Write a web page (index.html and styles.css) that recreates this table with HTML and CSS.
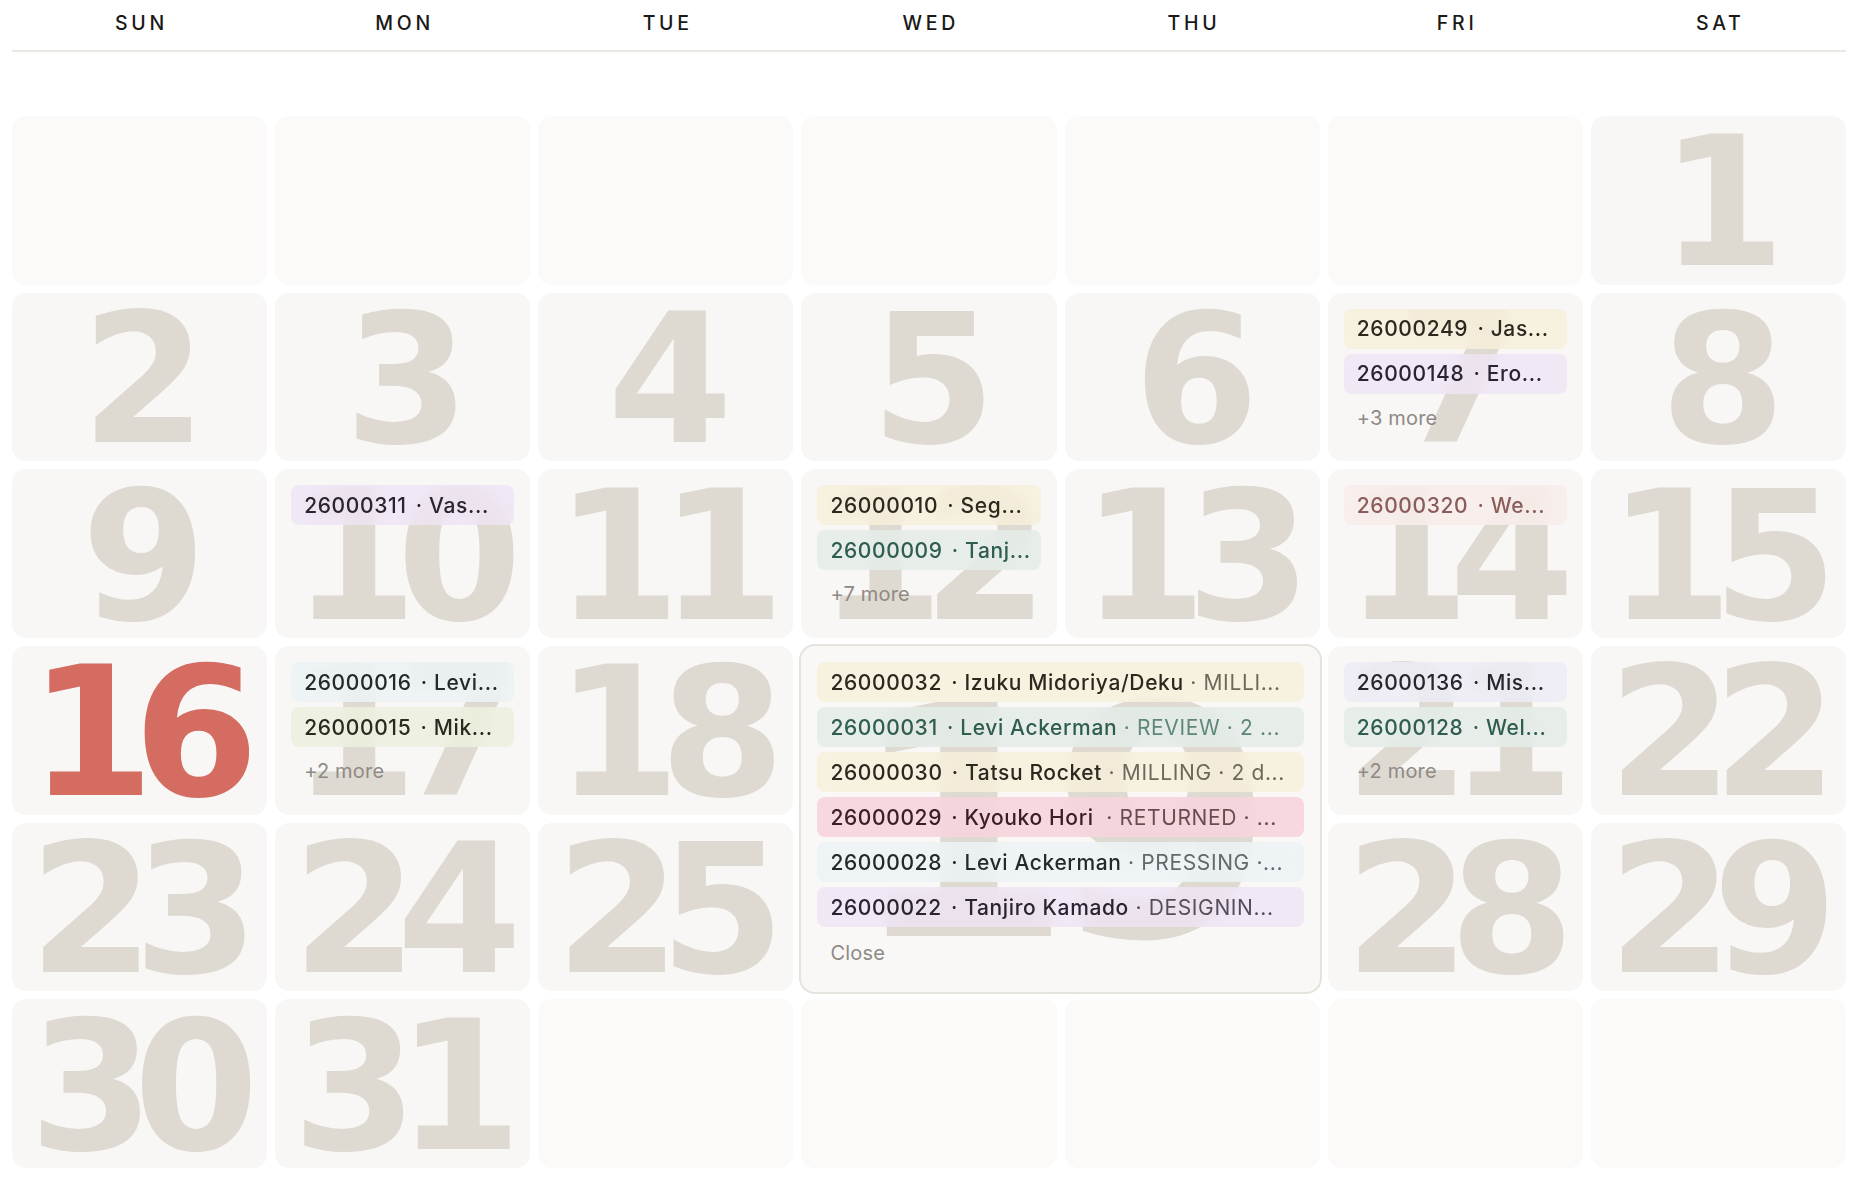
FILE: index.html
```html
<!DOCTYPE html>
<html lang="en">
<head>
<meta charset="utf-8">
<title>Calendar</title>
<link rel="stylesheet" href="styles.css">
</head>
<body>
<div class="cal">
  <div class="weekdays">
    <div class="wd">SUN</div><div class="wd">MON</div><div class="wd">TUE</div><div class="wd">WED</div><div class="wd">THU</div><div class="wd">FRI</div><div class="wd">SAT</div>
  </div>
  <div class="month">
    <div class="cell empty"></div>
    <div class="cell empty"></div>
    <div class="cell empty"></div>
    <div class="cell empty"></div>
    <div class="cell empty"></div>
    <div class="cell empty"></div>
    <div class="cell"><span class="num">1</span></div>

    <div class="cell"><span class="num">2</span></div>
    <div class="cell"><span class="num">3</span></div>
    <div class="cell"><span class="num">4</span></div>
    <div class="cell"><span class="num">5</span></div>
    <div class="cell"><span class="num">6</span></div>
    <div class="cell"><span class="num">7</span>
      <div class="events">
        <div class="chip c-cream"><span class="id">26000249</span> · Jas...</div>
        <div class="chip c-purple"><span class="id">26000148</span> · Ero...</div>
        <div class="more">+3 more</div>
      </div>
    </div>
    <div class="cell"><span class="num">8</span></div>

    <div class="cell"><span class="num">9</span></div>
    <div class="cell"><span class="num">10</span>
      <div class="events">
        <div class="chip c-purple"><span class="id">26000311</span> · Vas...</div>
      </div>
    </div>
    <div class="cell"><span class="num">11</span></div>
    <div class="cell"><span class="num">12</span>
      <div class="events">
        <div class="chip c-cream"><span class="id">26000010</span> · Seg...</div>
        <div class="chip c-green"><span class="id">26000009</span> · Tanj...</div>
        <div class="more">+7 more</div>
      </div>
    </div>
    <div class="cell"><span class="num">13</span></div>
    <div class="cell"><span class="num">14</span>
      <div class="events">
        <div class="chip c-rose"><span class="id">26000320</span> · We...</div>
      </div>
    </div>
    <div class="cell"><span class="num">15</span></div>

    <div class="cell"><span class="num today">16</span></div>
    <div class="cell"><span class="num">17</span>
      <div class="events">
        <div class="chip c-blue"><span class="id">26000016</span> · Levi...</div>
        <div class="chip c-olive"><span class="id">26000015</span> · Mik...</div>
        <div class="more">+2 more</div>
      </div>
    </div>
    <div class="cell"><span class="num">18</span></div>
    <div class="cell open"><span class="num">19</span>
      <div class="popover">
        <span class="num big">19</span>
        <div class="events">
          <div class="chip c-cream"><span class="id">26000032</span> · Izuku Midoriya/Deku<span class="meta"> · MILLI...</span></div>
          <div class="chip c-green"><span class="id">26000031</span> · Levi Ackerman<span class="meta"> · REVIEW · 2 ...</span></div>
          <div class="chip c-cream"><span class="id">26000030</span> · Tatsu Rocket<span class="meta"> · MILLING · 2 d...</span></div>
          <div class="chip c-pink"><span class="id">26000029</span> · Kyouko Hori&nbsp;<span class="meta"> · RETURNED · ...</span></div>
          <div class="chip c-blue"><span class="id">26000028</span> · Levi Ackerman<span class="meta"> · PRESSING ·...</span></div>
          <div class="chip c-purple"><span class="id">26000022</span> · Tanjiro Kamado<span class="meta"> · DESIGNIN...</span></div>
          <div class="more close">Close</div>
        </div>
      </div>
    </div>
    <div class="cell"><span class="num">20</span></div>
    <div class="cell"><span class="num">21</span>
      <div class="events">
        <div class="chip c-lav"><span class="id">26000136</span> · Mis...</div>
        <div class="chip c-green"><span class="id">26000128</span> · Wel...</div>
        <div class="more">+2 more</div>
      </div>
    </div>
    <div class="cell"><span class="num">22</span></div>

    <div class="cell"><span class="num">23</span></div>
    <div class="cell"><span class="num">24</span></div>
    <div class="cell"><span class="num">25</span></div>
    <div class="cell"><span class="num">26</span></div>
    <div class="cell"><span class="num">27</span></div>
    <div class="cell"><span class="num">28</span></div>
    <div class="cell"><span class="num">29</span></div>

    <div class="cell"><span class="num">30</span></div>
    <div class="cell"><span class="num">31</span></div>
    <div class="cell empty"></div>
    <div class="cell empty"></div>
    <div class="cell empty"></div>
    <div class="cell empty"></div>
    <div class="cell empty"></div>
  </div>
</div>
</body>
</html>
```
FILE: styles.css
```css
* { box-sizing: border-box; }
html, body { margin: 0; padding: 0; background: #ffffff; }
body { font-family: "Inter", "Noto Sans", sans-serif; color: #1c1b1a; }

.cal { margin: 0 16px 0 12px; }

.weekdays {
  display: grid;
  grid-template-columns: repeat(7, 1fr);
  gap: 8px;
  height: 52px;
  padding-bottom: 4px;
  align-items: center;
  border-bottom: 2px solid #ece8e4;
}
.wd {
  text-align: center;
  font-size: 19.5px;
  font-weight: 500;
  letter-spacing: 0.19em;
  padding-left: 0.19em;
  color: #1a1918;
}

.month {
  margin-top: 64px;
  display: grid;
  grid-template-columns: repeat(7, minmax(0, 1fr));
  grid-template-rows: repeat(6, minmax(0, 1fr));
  gap: 8px;
  height: 1052px;
}

.cell {
  position: relative;
  background: #f8f7f5;
  border-radius: 14px;
  padding: 16px;
  display: grid;
  grid-template-columns: minmax(0, 1fr);
  grid-template-rows: minmax(0, 1fr);
}
.cell.empty { background: #fbfaf9; }

.num {
  grid-area: 1 / 1;
  place-self: center;
  margin-top: 6px;
  font-family: "DejaVu Sans", sans-serif;
  font-size: 180px;
  font-weight: 700;
  line-height: 0.7;
  letter-spacing: -0.115em;
  padding-right: 12px;
  color: #ded9d1;
  white-space: nowrap;
}
.num.today { color: #d46c61; }

.events {
  grid-area: 1 / 1;
  align-self: start;
  display: flex;
  flex-direction: column;
  gap: 5px;
  min-width: 0;
  position: relative;
}

.chip {
  height: 40px;
  display: flex;
  align-items: center;
  padding: 0 13px;
  border-radius: 8px;
  font-size: 21px;
  font-weight: 450;
  letter-spacing: 0.03em;
  white-space: pre;
  overflow: hidden;
  backdrop-filter: blur(7px);
  -webkit-backdrop-filter: blur(7px);
}
.chip .id { margin-right: 3px; }
.chip .meta { font-weight: 400; }

.c-cream { background: rgba(247, 239, 219, 0.82); color: #2c281f; }
.c-cream .meta { color: #6d685c; }
.c-purple { background: rgba(238, 228, 244, 0.82); color: #2a2430; }
.c-purple .meta { color: #554d5c; }
.c-green { background: rgba(228, 236, 232, 0.85); color: #2f5d50; }
.c-green .meta { color: #5d877b; }
.c-pink { background: rgba(246, 212, 220, 0.9); color: #3a2026; }
.c-pink .meta { color: #6a4b52; }
.c-blue { background: rgba(236, 243, 245, 0.85); color: #25292c; }
.c-blue .meta { color: #62686c; }
.c-olive { background: rgba(236, 240, 222, 0.85); color: #2a2a21; }
.c-lav { background: rgba(237, 236, 246, 0.85); color: #27262e; }
.c-rose { background: rgba(248, 237, 235, 0.85); color: #8a5c5a; }

.more {
  height: 38px;
  display: flex;
  align-items: center;
  padding-left: 13px;
  font-size: 20px;
  letter-spacing: 0.01em;
  color: #8e8a85;
}
.more.close { height: 42px; }

.popover {
  position: absolute;
  top: -2px;
  left: -2px;
  width: calc(200% + 12px);
  z-index: 10;
  background: #f9f8f6;
  border: 2px solid #e6e2dd;
  border-radius: 16px;
  padding: 16px 16px 18px;
  display: grid;
  grid-template-columns: minmax(0, 1fr);
}
.num.big {
  font-size: 322px;
  line-height: 0.5;
  letter-spacing: -0.07em;
  padding-right: 20px;
  margin-top: 12px;
}
```
